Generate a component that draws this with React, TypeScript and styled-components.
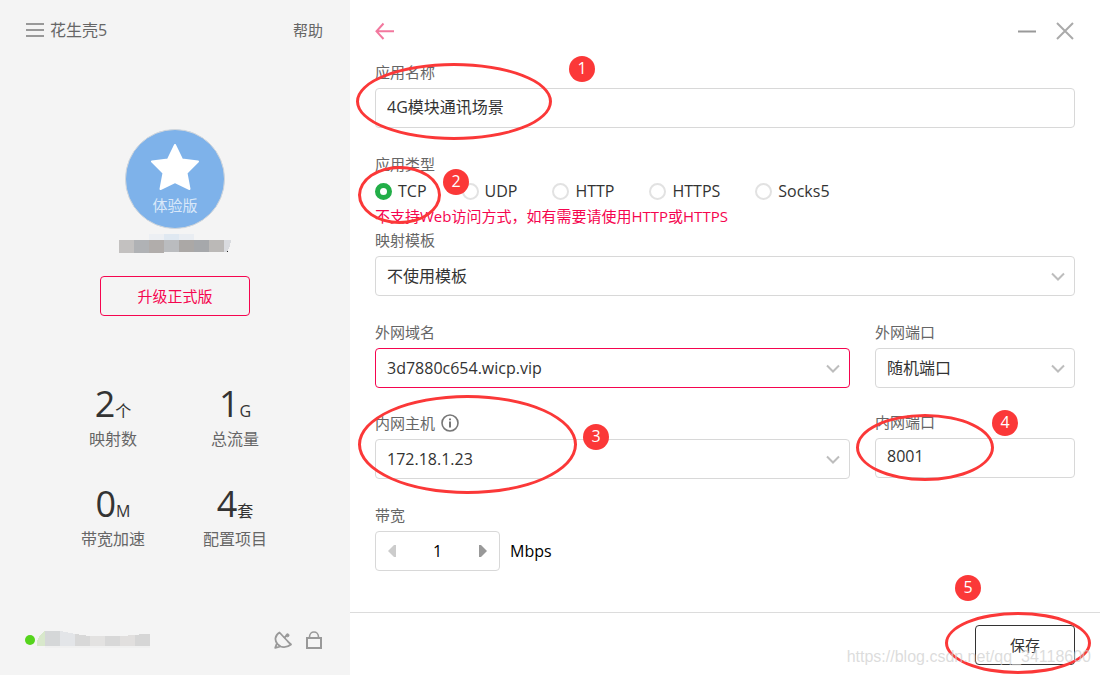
import React, { useState } from "react";
import styled, { createGlobalStyle, css } from "styled-components";

const color = {
  accent: "#f5054f",
  mark: "#fb3838",
  line: "#d8d8d8",
  text: "#333333",
  muted: "#666666",
  icon: "#999999",
  side: "#f4f4f4",
};

const GlobalStyle = createGlobalStyle`
  * { box-sizing: border-box; }
  body {
    margin: 0;
    background: #ffffff;
    color: ${color.text};
    font-family: "Open Sans", "Noto Sans CJK SC", sans-serif;
    font-size: 16px;
    line-height: 20px;
  }
  button, input, select { font: inherit; color: inherit; }
`;

const Window = styled.div`
  display: flex;
  min-height: 100vh;
`;

/* ---------- sidebar ---------- */

const Sidebar = styled.aside`
  flex: 0 0 350px;
  display: flex;
  flex-direction: column;
  background: ${color.side};
`;

const SideHeader = styled.header`
  display: flex;
  align-items: center;
  justify-content: space-between;
  height: 60px;
  padding: 0 27px 0 26px;
  color: ${color.muted};
`;

const Brand = styled.div`
  display: flex;
  align-items: center;
  gap: 6px;
`;

const PlainButton = styled.button`
  display: flex;
  align-items: center;
  justify-content: center;
  padding: 0;
  border: 0;
  background: none;
  cursor: pointer;
`;

const HelpLink = styled.a`
  color: ${color.muted};
  font-size: 15px;
  text-decoration: none;
`;

const Profile = styled.section`
  display: flex;
  flex-direction: column;
  align-items: center;
  padding-top: 69px;
`;

const Medal = styled.div`
  display: flex;
  flex-direction: column;
  align-items: center;
  width: 100px;
  height: 100px;
  padding-top: 14px;
  border: 1px solid #d3d7db;
  border-radius: 50%;
  background: #7eb2ea;
  color: #d9e8f9;
  font-size: 15px;
`;

const MedalText = styled.span`
  margin-top: 5px;
`;

const HiddenName = styled.svg`
  display: block;
  margin: 5px 0 23px;
`;

const UpgradeButton = styled.button`
  width: 150px;
  height: 40px;
  padding: 0;
  border: 1px solid ${color.accent};
  border-radius: 4px;
  background: none;
  color: ${color.accent};
  font-size: 15px;
  cursor: pointer;
`;

const Stats = styled.dl`
  display: grid;
  grid-template-columns: 122px 122px;
  row-gap: 30px;
  margin: 63px 0 0 52px;
`;

const Stat = styled.div`
  display: flex;
  flex-direction: column-reverse;
  align-items: center;
`;

const StatName = styled.dt`
  height: 20px;
  color: ${color.muted};
`;

const StatValue = styled.dd`
  margin: 0;
  font-size: 36px;
  line-height: 50px;
`;

const Unit = styled.span`
  font-size: 16px;
  line-height: 20px;
`;

const StatusBar = styled.footer`
  display: flex;
  align-items: center;
  height: 70px;
  margin-top: auto;
  padding: 0 28px 0 25px;
`;

const OnlineDot = styled.span`
  width: 10px;
  height: 10px;
  border-radius: 50%;
  background: #55d41c;
`;

const StatusIcons = styled.div`
  display: flex;
  gap: 14px;
  margin-left: auto;
`;

/* ---------- main panel ---------- */

const Main = styled.main`
  flex: 1;
  min-width: 0;
  display: flex;
  flex-direction: column;
`;

const TitleBar = styled.header`
  display: flex;
  align-items: center;
  height: 62px;
  padding: 0 25px;
`;

const WindowButtons = styled.div`
  display: flex;
  gap: 18px;
  margin-left: auto;
`;

const Form = styled.form`
  flex: 1;
  display: flex;
  flex-direction: column;
`;

const Fields = styled.div`
  flex: 1;
  padding: 0 25px 40px;
`;

const Row = styled.div<{ $gap: number }>`
  display: grid;
  grid-template-columns: minmax(0, 1fr) 200px;
  align-items: start;
  column-gap: 25px;
  margin-top: ${(p) => p.$gap}px;
`;

const Field = styled.div<{ $gap?: number }>`
  position: relative;
  margin-top: ${(p) => p.$gap ?? 0}px;
`;

const labelText = css`
  color: ${color.muted};
  font-size: 15px;
  line-height: 20px;
`;

const Label = styled.label`
  ${labelText}
  display: block;
  margin-bottom: 6px;
`;

const LabelLine = styled.div`
  display: flex;
  align-items: center;
  gap: 6px;
  height: 21px;
  margin-bottom: 6px;

  ${Label} {
    margin: 0;
  }
`;

const box = css`
  display: block;
  width: 100%;
  height: 40px;
  border: 1px solid ${color.line};
  border-radius: 4px;
  background: #ffffff;
`;

const TextInput = styled.input`
  ${box}
  padding: 0 11px 4px;
`;

const SelectBox = styled.div`
  position: relative;
`;

const Select = styled.select<{ $active?: boolean }>`
  ${box}
  appearance: none;
  padding: 0 36px 0 11px;
  ${(p) => p.$active && `border-color: ${color.accent};`}
`;

const Chevron = styled.svg`
  position: absolute;
  top: 16px;
  right: 10px;
  pointer-events: none;
`;

const TypeGroup = styled.fieldset`
  margin: 0;
  padding: 0;
  border: 0;
`;

const Legend = styled.legend`
  ${labelText}
  padding: 0;
`;

const Options = styled.div`
  display: flex;
  gap: 35px;
  height: 22px;
  margin-top: 6px;
`;

const Option = styled.label`
  display: flex;
  align-items: center;
  gap: 6px;
`;

const Radio = styled.input`
  appearance: none;
  width: 17px;
  height: 17px;
  margin: 0;
  border: 2px solid #e2e2e2;
  border-radius: 50%;
  background: #ffffff;

  &:checked {
    border: 5px solid #22ae48;
  }
`;

const Warning = styled.p`
  margin: 2px 0;
  color: ${color.accent};
  font-size: 15px;
  line-height: 24px;
`;

const StepperLine = styled.div`
  display: flex;
  align-items: center;
  gap: 10px;
  color: #000000;
`;

const Stepper = styled.div`
  ${box}
  display: flex;
  width: 125px;
  padding: 0 8px;
`;

const StepButton = styled(PlainButton)`
  flex: 0 0 16px;
`;

const StepInput = styled.input`
  flex: 1;
  min-width: 0;
  padding: 0;
  border: 0;
  background: none;
  text-align: center;
`;

const Actions = styled.footer`
  position: relative;
  display: flex;
  justify-content: flex-end;
  padding: 12px 25px 10px;
  border-top: 1px solid #dcdcdc;
`;

const SaveWrap = styled.div`
  position: relative;
`;

const SaveButton = styled.button`
  width: 100px;
  height: 40px;
  padding: 0;
  border: 1px solid ${color.text};
  border-radius: 4px;
  background: #ffffff;
  font-size: 15px;
  cursor: pointer;
`;

/* ---------- tutorial marks lying over the form ---------- */

interface Place {
  $x: number;
  $y: number;
}

const Ring = styled.span<Place & { $w: number; $h: number }>`
  position: absolute;
  z-index: 1;
  left: ${(p) => p.$x}px;
  top: ${(p) => p.$y}px;
  width: ${(p) => p.$w}px;
  height: ${(p) => p.$h}px;
  border: 3px solid ${color.mark};
  border-radius: 50%;
  pointer-events: none;
`;

const Step = styled.span<Place>`
  position: absolute;
  z-index: 2;
  left: ${(p) => p.$x}px;
  top: ${(p) => p.$y}px;
  width: 26px;
  height: 26px;
  border-radius: 50%;
  background: ${color.mark};
  color: #ffffff;
  line-height: 24px;
  text-align: center;
  pointer-events: none;
`;

const Watermark = styled.span`
  position: absolute;
  z-index: 3;
  right: 9px;
  bottom: 8px;
  color: rgba(205, 205, 205, 0.7);
  font-family: "Liberation Sans", Arial, sans-serif;
  white-space: nowrap;
  pointer-events: none;
`;

const ArrowDown = () => (
  <Chevron width="14" height="9" viewBox="0 0 14 9" fill="none" stroke="#bdbdbd" strokeWidth="2">
    <path d="M1 1.5 L7 7.5 L13 1.5" />
  </Chevron>
);

const stats = [
  { value: "2", unit: "个", name: "映射数" },
  { value: "1", unit: "G", name: "总流量" },
  { value: "0", unit: "M", name: "带宽加速" },
  { value: "4", unit: "套", name: "配置项目" },
];

const types = ["TCP", "UDP", "HTTP", "HTTPS", "Socks5"];

export default function App() {
  const [name, setName] = useState("4G模块通讯场景");
  const [type, setType] = useState("TCP");
  const [port, setPort] = useState("8001");
  const [speed, setSpeed] = useState(1);

  return (
    <Window>
      <GlobalStyle />
      <Sidebar>
        <SideHeader>
          <Brand>
            <PlainButton type="button" aria-label="菜单">
              <svg width="18" height="14" viewBox="0 0 18 14" fill={color.icon}>
                <rect width="18" height="2" />
                <rect y="6" width="18" height="2" />
                <rect y="12" width="18" height="2" />
              </svg>
            </PlainButton>
            <span>花生壳5</span>
          </Brand>
          <HelpLink href="#help">帮助</HelpLink>
        </SideHeader>

        <Profile>
          <Medal>
            <svg width="48" height="46" viewBox="0 0 48 46" fill="#ffffff" stroke="#ffffff" strokeWidth="2" strokeLinejoin="round">
              <path d="M24 1 L31 15.5 L47 17.5 L35.5 29 L38.5 45 L24 38 L9.500 45 L12.500 29 L1 17.500 L17 15.500 Z" />
            </svg>
            <MedalText>体验版</MedalText>
          </Medal>
          <HiddenName width="112" height="19" viewBox="0 0 112 19" shapeRendering="crispEdges">
            <rect x="30" width="15" height="6" fill="#eceff3" />
            <rect x="45" width="15" height="6" fill="#dfe8f1" />
            <rect x="60" width="15" height="6" fill="#e9edf2" />
            <rect y="6" width="15" height="13" fill="#c3c1c0" />
            <rect x="15" y="6" width="15" height="13" fill="#b0b2b5" />
            <rect x="30" y="6" width="15" height="13" fill="#b1adab" />
            <rect x="45" y="6" width="15" height="12" fill="#babcbf" />
            <rect x="60" y="6" width="15" height="12" fill="#aba8a6" />
            <rect x="75" y="6" width="15" height="12" fill="#a6a8ab" />
            <rect x="90" y="6" width="15" height="12" fill="#bbb9b7" />
            <path d="M105 6 h7 l-1 6 l-3 6 h-3 Z" fill="#d9dbdf" />
            <rect x="108" y="17" width="1" height="1" fill="#222222" />
          </HiddenName>
          <UpgradeButton type="button">升级正式版</UpgradeButton>
        </Profile>

        <Stats>
          {stats.map((s) => (
            <Stat key={s.name}>
              <StatName>{s.name}</StatName>
              <StatValue>
                {s.value}
                <Unit>{s.unit}</Unit>
              </StatValue>
            </Stat>
          ))}
        </Stats>

        <StatusBar>
          <OnlineDot />
          <svg width="115" height="18" viewBox="0 0 115 18" shapeRendering="crispEdges">
            <path d="M10 0 V15 H2 V10 L5 4 Z" fill="#d8e8cb" />
            <rect x="10" width="15" height="15" fill="#d5d7d8" />
            <path d="M25 0 L40 3 V15 H25 Z" fill="#e3e5e8" />
            <path d="M40 3 L55 5 V15 H40 Z" fill="#d8d8d8" />
            <rect x="55" y="5" width="15" height="10" fill="#e3e2e1" />
            <rect x="70" y="5" width="15" height="10" fill="#d8d8d8" />
            <path d="M85 5 L100 4 V15 H85 Z" fill="#e1dfde" />
            <path d="M100 4 L107 3 H115 V15 H100 Z" fill="#d6d6d6" />
            <rect x="10" y="15" width="105" height="2" fill="#f0f0f0" />
          </svg>
          <StatusIcons>
            <svg width="18" height="18" viewBox="0 0 18 18" fill="none" stroke={color.icon} strokeWidth="1.8" strokeLinejoin="round">
              <path d="M5.500 1.500 C0.500 4.500 0.500 9.500 3.500 13 C7 17 12.500 17 17 13.500 C16 12.500 14.500 11.500 13.500 10 Z" />
              <path d="M2.800 12.500 L1.200 16.800 L6.500 15.500" />
              <path d="M10 7 L12.500 4.800" />
              <circle cx="13.500" cy="4.300" r="1.500" fill={color.icon} strokeWidth="1" />
            </svg>
            <svg width="16" height="18" viewBox="0 0 16 18" fill="none" stroke={color.icon} strokeWidth="2">
              <rect x="1" y="7" width="14" height="10" />
              <path d="M3.500 6 C3.500 -0.700 12.500 -0.700 12.500 6" strokeWidth="1.600" />
            </svg>
          </StatusIcons>
        </StatusBar>
      </Sidebar>

      <Main>
        <TitleBar>
          <PlainButton type="button" aria-label="返回">
            <svg width="20" height="18" viewBox="0 0 20 18" fill="none" stroke="#f2789e" strokeWidth="2">
              <path d="M8.500 1.500 L1.500 9.300 L8.500 17 M1.500 9.300 H19" />
            </svg>
          </PlainButton>
          <WindowButtons>
            <PlainButton type="button" aria-label="最小化">
              <svg width="20" height="18" viewBox="0 0 20 18" stroke={color.icon} strokeWidth="2">
                <path d="M1 9.500 H19" />
              </svg>
            </PlainButton>
            <PlainButton type="button" aria-label="关闭">
              <svg width="20" height="18" viewBox="0 0 20 18" stroke="#aaaaaa" strokeWidth="2">
                <path d="M2 1 L18 17 M18 1 L2 17" />
              </svg>
            </PlainButton>
          </WindowButtons>
        </TitleBar>

        <Form onSubmit={(e) => e.preventDefault()}>
          <Fields>
            <Field>
              <Label htmlFor="name">应用名称</Label>
              <TextInput id="name" value={name} onChange={(e) => setName(e.target.value)} />
              <Ring $x={-19} $y={1} $w={196} $h={77} />
              <Step $x={194} $y={-6}>1</Step>
            </Field>

            <Field $gap={26}>
              <TypeGroup>
                <Legend>应用类型</Legend>
                <Options>
                  {types.map((t) => (
                    <Option key={t}>
                      <Radio type="radio" name="type" checked={type === t} onChange={() => setType(t)} />
                      {t}
                    </Option>
                  ))}
                </Options>
                <Warning>不支持Web访问方式，如有需要请使用HTTP或HTTPS</Warning>
              </TypeGroup>
              <Ring $x={-17} $y={12} $w={83} $h={58} />
              <Step $x={68} $y={15}>2</Step>
            </Field>

            <Field>
              <Label htmlFor="template">映射模板</Label>
              <SelectBox>
                <Select id="template">
                  <option>不使用模板</option>
                </Select>
                <ArrowDown />
              </SelectBox>
            </Field>

            <Row $gap={26}>
              <Field>
                <Label htmlFor="domain">外网域名</Label>
                <SelectBox>
                  <Select id="domain" $active>
                    <option>3d7880c654.wicp.vip</option>
                  </Select>
                  <ArrowDown />
                </SelectBox>
              </Field>
              <Field>
                <Label htmlFor="outer-port">外网端口</Label>
                <SelectBox>
                  <Select id="outer-port">
                    <option>随机端口</option>
                  </Select>
                  <ArrowDown />
                </SelectBox>
              </Field>
            </Row>

            <Row $gap={24}>
              <Field>
                <LabelLine>
                  <Label htmlFor="host">内网主机</Label>
                  <svg width="18" height="18" viewBox="0 0 18 18" fill="none" stroke="#777777">
                    <circle cx="9" cy="9" r="8" strokeWidth="1.600" />
                    <path d="M9 4.500 V6.200 M9 7.500 V13.500" strokeWidth="2" />
                  </svg>
                </LabelLine>
                <SelectBox>
                  <Select id="host">
                    <option>172.18.1.23</option>
                  </Select>
                  <ArrowDown />
                </SelectBox>
                <Ring $x={-17} $y={-17} $w={219} $h={99} />
                <Step $x={208} $y={12}>3</Step>
              </Field>
              <Field>
                <Label htmlFor="inner-port">内网端口</Label>
                <TextInput id="inner-port" value={port} onChange={(e) => setPort(e.target.value)} />
                <Ring $x={-19} $y={2} $w={138} $h={67} />
                <Step $x={117} $y={-2}>4</Step>
              </Field>
            </Row>

            <Field $gap={26}>
              <Label htmlFor="speed">带宽</Label>
              <StepperLine>
                <Stepper>
                  <StepButton type="button" aria-label="减少" onClick={() => setSpeed(Math.max(1, speed - 1))}>
                    <svg width="8" height="12" viewBox="0 0 8 12" fill="#cccccc">
                      <path d="M8 0 V12 H6 L0 6 L6 0 Z" />
                    </svg>
                  </StepButton>
                  <StepInput id="speed" value={speed} onChange={(e) => setSpeed(Number(e.target.value) || 1)} />
                  <StepButton type="button" aria-label="增加" onClick={() => setSpeed(speed + 1)}>
                    <svg width="8" height="12" viewBox="0 0 8 12" fill="#999999">
                      <path d="M0 0 V12 H2 L8 6 L2 0 Z" />
                    </svg>
                  </StepButton>
                </Stepper>
                <span>Mbps</span>
              </StepperLine>
            </Field>
          </Fields>

          <Actions>
            <SaveWrap>
              <SaveButton type="submit">保存</SaveButton>
              <Ring $x={-30} $y={-13} $w={146} $h={62} />
              <Step $x={-20} $y={-50}>5</Step>
            </SaveWrap>
            <Watermark>https://blog.csdn.net/qq_34118600</Watermark>
          </Actions>
        </Form>
      </Main>
    </Window>
  );
}
